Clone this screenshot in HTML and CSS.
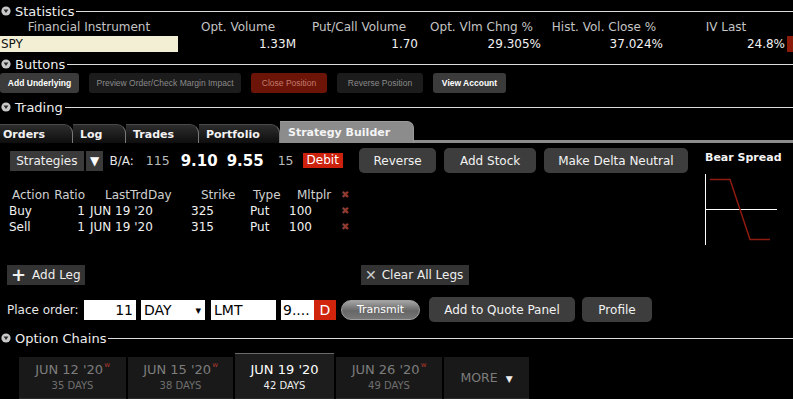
FILE: index.html
```html
<!DOCTYPE html>
<html lang="en">
<head>
  <meta charset="UTF-8">
  <title>Strategy Builder</title>
  <link rel="stylesheet" href="styles.css">
</head>
<body>
  <div class="section-head first">
    <svg class="toggle" width="10" height="10" viewBox="0 0 10 10"><circle cx="5" cy="5" r="4.6" fill="#c9c9c9"/><path d="M2.6 3.6 L7.4 3.6 L5 7 Z" fill="#2a2a2a"/></svg>
    <span class="section-title">Statistics</span>
    <span class="rule"></span>
  </div>

  <div class="stats">
    <div class="stats-head">
      <span>Financial Instrument</span>
      <span>Opt. Volume</span>
      <span>Put/Call Volume</span>
      <span>Opt. Vlm Chng %</span>
      <span>Hist. Vol. Close %</span>
      <span>IV Last</span>
      <span></span>
    </div>
    <div class="stats-row">
      <span class="symbol">SPY</span>
      <span>1.33M</span>
      <span>1.70</span>
      <span>29.305%</span>
      <span>37.024%</span>
      <span>24.8%</span>
      <span class="flag"></span>
    </div>
  </div>

  <div class="section-head">
    <svg class="toggle" width="10" height="10" viewBox="0 0 10 10"><circle cx="5" cy="5" r="4.6" fill="#c9c9c9"/><path d="M2.6 3.6 L7.4 3.6 L5 7 Z" fill="#2a2a2a"/></svg>
    <span class="section-title">Buttons</span>
    <span class="rule"></span>
  </div>

  <div class="action-buttons">
    <button class="small-btn w79">Add Underlying</button>
    <button class="small-btn off w152">Preview Order/Check Margin Impact</button>
    <button class="small-btn danger w76">Close Position</button>
    <button class="small-btn off w86">Reverse Position</button>
    <button class="small-btn w73">View Account</button>
  </div>

  <div class="section-head trading">
    <svg class="toggle" width="10" height="10" viewBox="0 0 10 10"><circle cx="5" cy="5" r="4.6" fill="#c9c9c9"/><path d="M2.6 3.6 L7.4 3.6 L5 7 Z" fill="#2a2a2a"/></svg>
    <span class="section-title">Trading</span>
    <span class="rule"></span>
  </div>

  <div class="tabs">
    <div class="tab t-orders">Orders</div>
    <div class="tab t-log">Log</div>
    <div class="tab t-trades">Trades</div>
    <div class="tab t-portfolio">Portfolio</div>
    <div class="tab active t-builder">Strategy Builder</div>
    <div class="tab-fill"></div>
  </div>

  <div class="builder">
    <div class="builder-main">
      <div class="strategy-bar">
        <span class="dark-box strategies">Strategies</span>
        <span class="dark-box arrow">&#9660;</span>
        <span class="ba">B/A:</span>
        <span class="size size-bid">115</span>
        <span class="price">9.10</span>
        <span class="price">9.55</span>
        <span class="size size-ask">15</span>
        <span class="debit">Debit</span>
        <button class="round-btn w78">Reverse</button>
        <button class="round-btn w92">Add Stock</button>
        <button class="round-btn w145">Make Delta Neutral</button>
      </div>

      <div class="legs">
        <div class="leg head">
          <span class="c-action">Action</span>
          <span class="c-ratio">Ratio</span>
          <span class="c-date">LastTrdDay</span>
          <span class="c-strike">Strike</span>
          <span class="c-type">Type</span>
          <span class="c-mult">Mltplr</span>
          <span class="c-del">&#10006;</span>
        </div>
        <div class="leg">
          <span class="c-action">Buy</span>
          <span class="c-ratio">1</span>
          <span class="c-date">JUN 19 '20</span>
          <span class="c-strike">325</span>
          <span class="c-type">Put</span>
          <span class="c-mult">100</span>
          <span class="c-del">&#10006;</span>
        </div>
        <div class="leg">
          <span class="c-action">Sell</span>
          <span class="c-ratio">1</span>
          <span class="c-date">JUN 19 '20</span>
          <span class="c-strike">315</span>
          <span class="c-type">Put</span>
          <span class="c-mult">100</span>
          <span class="c-del">&#10006;</span>
        </div>
      </div>
    </div>

    <div class="builder-side">
      <div class="side-title">Bear Spread</div>
      <svg class="payoff" width="74" height="72" viewBox="0 0 74 72">
        <line x1="0.5" y1="0" x2="0.5" y2="71" stroke="#fff" stroke-width="1"/>
        <line x1="0" y1="35.5" x2="72" y2="35.5" stroke="#fff" stroke-width="1"/>
        <polyline points="5,5.5 25,5.5 45,65.5 65,65.5" fill="none" stroke="#8e1b10" stroke-width="1.5"/>
      </svg>
    </div>
  </div>

  <div class="leg-actions">
    <button class="flat-btn add-leg"><span class="plus">+</span>Add Leg</button>
    <button class="flat-btn clear-legs"><span class="times">&#10005;</span>Clear All Legs</button>
  </div>

  <div class="order-line">
    <span class="order-label">Place order:</span>
    <span class="field qty">11</span>
    <span class="field tif">DAY<span class="caret">&#9662;</span></span>
    <span class="field otype">LMT</span>
    <span class="field lmt">9....</span><span class="field-d">D</span>
    <button class="transmit">Transmit</button>
    <button class="round-btn w146">Add to Quote Panel</button>
    <button class="round-btn w70">Profile</button>
  </div>

  <div class="section-head chains">
    <svg class="toggle" width="10" height="10" viewBox="0 0 10 10"><circle cx="5" cy="5" r="4.6" fill="#c9c9c9"/><path d="M2.6 3.6 L7.4 3.6 L5 7 Z" fill="#2a2a2a"/></svg>
    <span class="section-title">Option Chains</span>
    <span class="rule"></span>
  </div>

  <div class="expiries">
    <div class="expiry w107">
      <div class="exp-date">JUN 12 '20<span class="weekly">w</span></div>
      <div class="exp-days">35 DAYS</div>
    </div>
    <div class="expiry w105">
      <div class="exp-date">JUN 15 '20<span class="weekly">w</span></div>
      <div class="exp-days">38 DAYS</div>
    </div>
    <div class="expiry current w99">
      <div class="exp-date">JUN 19 '20</div>
      <div class="exp-days">42 DAYS</div>
    </div>
    <div class="expiry w106">
      <div class="exp-date">JUN 26 '20<span class="weekly">w</span></div>
      <div class="exp-days">49 DAYS</div>
    </div>
    <div class="expiry more w85">MORE <span class="more-caret">&#9660;</span></div>
  </div>
</body>
</html>
```

FILE: styles.css
```css
body {
  margin: 0;
  background: #000;
  color: #e6e6e6;
  font-family: "DejaVu Sans", sans-serif;
  font-size: 12px;
  width: 793px;
  height: 399px;
  overflow: hidden;
}
button {
  font-family: inherit;
  cursor: pointer;
}

/* section headers */
.section-head {
  display: flex;
  align-items: center;
  height: 16px;
  margin-top: 4px;
  padding-left: 1px;
}
.section-head.first { margin-top: 3px; }
.section-head.trading { margin-top: 6px; }
.section-head.chains { margin-top: 8px; }
.toggle { margin-right: 4px; flex: none; }
.section-title {
  font-size: 13px;
  color: #eee;
  margin-right: 2px;
}
.rule {
  flex: 1;
  height: 1px;
  background: #ddd;
}

/* statistics */
.stats-head, .stats-row {
  display: grid;
  grid-template-columns: 178px 120px 122px 123px 122px 122px 6px;
}
.stats-head {
  height: 17px;
  line-height: 17px;
  color: #c4c4c4;
}
.stats-head span { text-align: center; }
.stats-row {
  height: 16px;
  line-height: 16px;
  color: #f2f2f2;
}
.stats-row span {
  text-align: right;
  padding-right: 2px;
}
.stats-row .symbol {
  text-align: left;
  background: #f3efd5;
  color: #111;
  padding-left: 1px;
}
.stats-row .flag {
  background: #8a1a0a;
  padding: 0;
}

/* buttons panel */
.action-buttons {
  display: flex;
  gap: 10px;
  margin-top: 1px;
  height: 20px;
}
.small-btn {
  height: 20px;
  border: none;
  border-radius: 3px;
  background: #3b3b3b;
  color: #fff;
  font-family: "Liberation Sans", sans-serif;
  font-size: 8.5px;
  font-weight: bold;
  padding: 0;
}
.small-btn.off {
  background: #1c1c1c;
  color: #8a8a8a;
  font-weight: normal;
}
.small-btn.danger {
  background: #6b1407;
  color: #c47a6e;
  font-weight: normal;
}
.w79 { width: 79px; }
.w152 { width: 152px; }
.w76 { width: 76px; }
.w86 { width: 86px; }
.w73 { width: 73px; }

/* trading tabs */
.tabs {
  display: flex;
  align-items: flex-end;
  margin-top: 7px;
  height: 21px;
}
.tab {
  height: 18px;
  line-height: 19px;
  font-weight: bold;
  font-size: 11px;
  color: #f2f2f2;
  background: linear-gradient(#2d2d2d, #0e0e0e);
  border-top: 1px solid #4a4a4a;
  border-right: 1px solid #7a7a7a;
  border-top-right-radius: 9px;
  box-sizing: content-box;
  padding-left: 3px;
}
.t-orders { width: 69px; }
.t-log { width: 45px; padding-left: 7px; }
.t-trades { width: 65px; padding-left: 7px; }
.t-portfolio { width: 73px; padding-left: 7px; }
.tab.active {
  width: 125px;
  padding-left: 8px;
  height: 21px;
  line-height: 22px;
  background: #8c8c8c;
  border-color: #9a9a9a;
  color: #f4f4f4;
  border-top-right-radius: 7px;
}
.tab-fill {
  flex: 1;
  height: 3px;
  background: #8c8c8c;
}

/* strategy builder */
.builder {
  display: flex;
}
.builder-main { width: 688px; }
.builder-side {
  flex: 1;
  padding-left: 17px;
  padding-top: 8px;
}
.side-title {
  font-weight: bold;
  font-size: 11px;
  color: #f4f4f4;
  height: 14px;
  line-height: 14px;
}
.payoff {
  display: block;
  margin-top: 9px;
}
.strategy-bar {
  display: flex;
  align-items: center;
  height: 25px;
  margin-top: 5px;
  padding-left: 10px;
}
.dark-box {
  background: #3a3a3a;
  height: 20px;
  line-height: 20px;
  color: #eee;
}
.strategies {
  width: 74px;
  text-align: center;
}
.arrow {
  width: 18px;
  margin-left: 2px;
  text-align: center;
  font-size: 12px;
  color: #fff;
}
.ba {
  margin-left: 6px;
  color: #e6e6e6;
}
.size { color: #bbb; font-size: 12.5px; }
.size-bid { margin-left: 12px; }
.size-ask { margin-left: 14px; }
.price {
  font-weight: bold;
  font-size: 15px;
  color: #fff;
  margin-left: 11px;
}
.price + .price { margin-left: 9px; }
.debit {
  margin-left: 9px;
  background: #cc210c;
  color: #fff;
  height: 15px;
  line-height: 15px;
  padding: 0 4px;
}
.round-btn {
  height: 25px;
  border: none;
  border-radius: 5px;
  background: #3d3d3d;
  color: #f2f2f2;
  font-size: 12px;
  padding: 0;
  margin-left: 8px;
}
.strategy-bar .w78 { margin-left: 16px; }
.w78 { width: 78px; }
.w92 { width: 92px; }
.w145 { width: 145px; }
.w146 { width: 146px; }
.w70 { width: 70px; }

.legs {
  margin-top: 14px;
  padding-left: 7px;
}
.leg {
  display: grid;
  grid-template-columns: 43px 36px 100px 60px 41px 50px 20px;
  height: 16px;
  line-height: 16px;
  color: #f0f0f0;
}
.leg.head { color: #d0d0d0; }
.c-action { padding-left: 2px; }
.head .c-action { padding-left: 5px; }
.c-ratio { text-align: right; padding-right: 1px; }
.c-date { padding-left: 4px; }
.head .c-date { padding-left: 19px; }
.c-strike { padding-left: 5px; }
.head .c-strike { padding-left: 15px; }
.c-type { padding-left: 4px; }
.head .c-type { padding-left: 7px; }
.c-mult { padding-left: 2px; }
.head .c-mult { padding-left: 10px; }
.c-del {
  color: #8e3c32;
  font-size: 10px;
  padding-left: 4px;
}

.leg-actions {
  display: flex;
  margin-top: 19px;
  padding-left: 7px;
  height: 20px;
}
.flat-btn {
  height: 20px;
  border: none;
  background: #333;
  color: #eee;
  font-size: 12px;
  padding: 0 4px;
  display: flex;
  align-items: center;
}
.add-leg { width: 78px; }
.clear-legs { width: 108px; margin-left: 276px; }
.plus {
  font-size: 18px;
  font-weight: bold;
  margin-right: 6px;
  line-height: 20px;
}
.times {
  font-size: 14px;
  color: #ccc;
  margin-right: 5px;
}

.order-line {
  display: flex;
  align-items: center;
  height: 25px;
  margin-top: 12px;
  padding-left: 7px;
}
.order-label {
  width: 77px;
  color: #e6e6e6;
}
.field {
  background: #fff;
  color: #000;
  height: 20px;
  line-height: 21px;
  font-size: 14px;
  box-sizing: border-box;
  padding: 0 3px;
}
.qty { width: 52px; text-align: right; }
.tif {
  width: 64px;
  margin-left: 5px;
  display: flex;
  justify-content: space-between;
}
.caret { font-size: 11px; padding-right: 1px; }
.otype { width: 65px; margin-left: 6px; }
.lmt { width: 33px; margin-left: 5px; padding: 0 2px; }
.field-d {
  width: 22px;
  height: 20px;
  line-height: 21px;
  background: #d0240c;
  color: #fff;
  font-size: 14px;
  text-align: center;
}
.transmit {
  width: 79px;
  height: 20px;
  margin-left: 5px;
  border-radius: 10px;
  border: 1px solid #a0a0a0;
  background: linear-gradient(#a4a4a4, #666 55%, #777);
  color: #fff;
  font-size: 11px;
  padding: 0;
}
.order-line .w146 { margin-left: 9px; }
.order-line .w70 { margin-left: 7px; }

/* option chains */
.expiries {
  display: flex;
  margin-top: 7px;
  margin-left: 19px;
  align-items: flex-end;
  height: 46px;
  gap: 2px;
}
.expiry {
  height: 42px;
  background: #191919;
  border-bottom: 1px solid #2a2a2a;
  text-align: center;
  color: #7d7d7d;
  box-sizing: border-box;
}
.expiry.current {
  height: 46px;
  background: #1d1d1d;
  border-top: 1px solid #6a6a6a;
  color: #fff;
  padding-top: 3px;
}
.exp-date {
  font-size: 13px;
  margin-top: 5px;
  height: 16px;
  line-height: 16px;
}
.weekly {
  display: inline-block;
  color: #b23a30;
  font-size: 7px;
  line-height: 7px;
  vertical-align: top;
  margin-left: 1px;
}
.exp-days {
  font-size: 10px;
  line-height: 14px;
  margin-top: 1px;
  color: #6f6f6f;
}
.current .exp-days { color: #eee; }
.more {
  line-height: 42px;
  font-size: 12.5px;
  color: #7d7d7d;
}
.more-caret {
  color: #eee;
  font-size: 9px;
  margin-left: 4px;
}
.w107 { width: 107px; }
.w105 { width: 105px; }
.w99 { width: 99px; }
.w106 { width: 106px; }
.w85 { width: 85px; }
```
